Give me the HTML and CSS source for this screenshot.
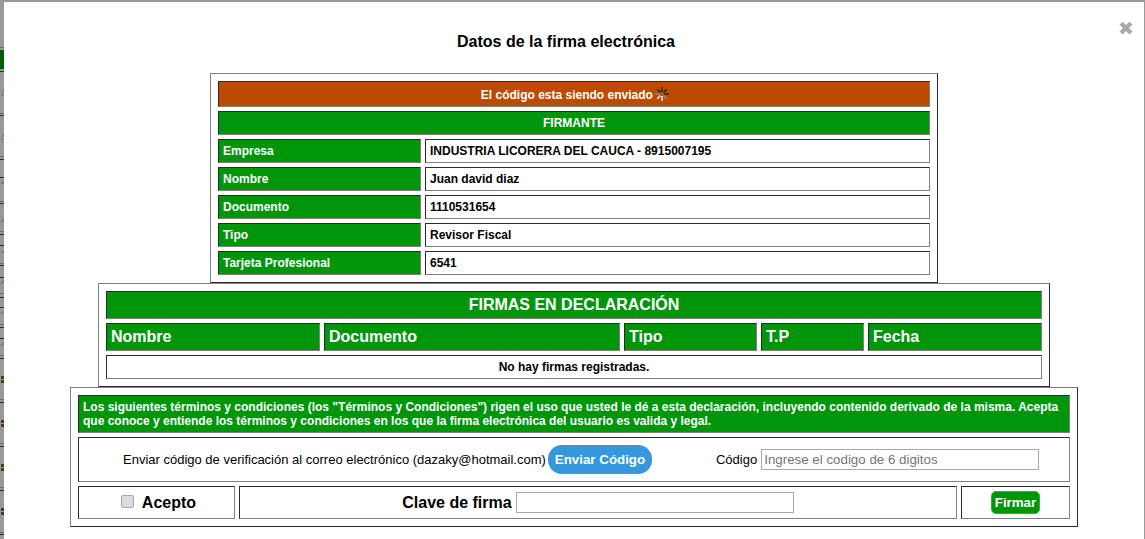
FILE: index.html
```html
<!DOCTYPE html>
<html lang="es">
<head>
<meta charset="utf-8">
<title>Datos de la firma electrónica</title>
<link rel="stylesheet" href="styles.css">
</head>
<body>
<svg class="strip" width="4" height="539" viewBox="0 0 4 539" aria-hidden="true">
  <rect class="s-green" x="0" y="50" width="4" height="19"/>
  <path class="s-light" d="M0 47.5h4M0 113.5h4M0 156.5h4M0 201.5h4M0 231.5h4M0 263.5h4M0 293.5h4M0 324.5h4M0 355.5h4M0 399.5h4M0 443.5h4M0 487.5h4M0 532.5h4"/>
  <path class="s-dark" d="M0 71.5h4M0 115.5h4M0 159.5h4M0 177.5h4M0 203.5h4M0 234.5h4M0 245.5h4M0 265.5h4M0 277.5h4M0 297.5h4M0 307.5h4M0 327.5h4M0 338.5h4M0 358.5h4M0 402.5h4M0 446.5h4M0 490.5h4M0 534.5h4"/>
  <path class="s-orange" d="M2 93l2-4M2 137l2-4M2 184l2-4M2 222l2-4M2 252l2-2M2 283l2-3M2 313l2-2M2 345l2-3"/>
  <path class="s-blue" d="M1 95h2M1 139h2M1 183h2M1 221h2M1 252h2M1 283h2M1 313h2M1 345h2"/>
  <path class="s-mark" d="M1 376h3v3h-3zM1 380h3v3h-3zM1 420h3v3h-3zM1 424h3v3h-3zM1 464h3v3h-3zM1 468h3v3h-3zM1 508h3v3h-3zM1 512h3v3h-3z"/>
</svg>

<main class="modal">
  <span class="close">✖</span>
  <h1 class="title">Datos de la firma electrónica</h1>

  <table class="box box-firmante">
    <colgroup><col class="c-label"><col class="c-value"></colgroup>
    <tbody>
      <tr class="row-status"><td colspan="2" class="cell orange center">El código esta siendo enviado
        <svg class="spinner" width="14" height="14" viewBox="0 0 14 14" aria-hidden="true">
          <path class="sp-dark" d="M7 0v5M2.2 2.2l3.2 3.2M11.8 2.2L8.6 5.4M14 7H9"/>
          <path class="sp-mid" d="M0 7h5M11.8 11.8L8.6 8.6"/>
          <path class="sp-light" d="M7 9v5M5.4 8.6l-3.2 3.2"/>
        </svg></td></tr>
      <tr><td colspan="2" class="cell green center">FIRMANTE</td></tr>
      <tr><td class="cell green">Empresa</td><td class="cell">INDUSTRIA LICORERA DEL CAUCA - 8915007195</td></tr>
      <tr><td class="cell green">Nombre</td><td class="cell">Juan david diaz</td></tr>
      <tr><td class="cell green">Documento</td><td class="cell">1110531654</td></tr>
      <tr><td class="cell green">Tipo</td><td class="cell">Revisor Fiscal</td></tr>
      <tr><td class="cell green">Tarjeta Profesional</td><td class="cell">6541</td></tr>
    </tbody>
  </table>

  <table class="box box-firmas">
    <colgroup><col class="c-nombre"><col class="c-doc"><col class="c-tipo"><col class="c-tp"><col class="c-fecha"></colgroup>
    <tbody>
      <tr class="row-big"><td colspan="5" class="cell green center big">FIRMAS EN DECLARACIÓN</td></tr>
      <tr class="row-big">
        <td class="cell green big">Nombre</td><td class="cell green big">Documento</td><td class="cell green big">Tipo</td><td class="cell green big">T.P</td><td class="cell green big">Fecha</td>
      </tr>
      <tr><td colspan="5" class="cell center">No hay firmas registradas.</td></tr>
    </tbody>
  </table>

  <table class="box box-terminos">
    <colgroup><col class="c-acepto"><col class="c-clave"><col class="c-firmar"></colgroup>
    <tbody>
      <tr><td colspan="3" class="cell green terms">Los siguientes términos y condiciones (los "Términos y Condiciones") rigen el uso que usted le dé a esta declaración, incluyendo contenido derivado de la misma. Acepta que conoce y entiende los términos y condiciones en los que la firma electrónica del usuario es valida y legal.</td></tr>
      <tr><td colspan="3" class="cell send-cell">
        <div class="send">
          <span class="send-text">Enviar código de verificación al correo electrónico (dazaky@hotmail.com)</span>
          <button class="btn-send" type="button">Enviar Código</button>
          <label class="code-label" for="codigo">Código</label>
          <input class="field" id="codigo" type="text" placeholder="Ingrese el codigo de 6 digitos">
        </div>
      </td></tr>
      <tr class="row-sign">
        <td class="cell"><label class="accept"><input class="check" type="checkbox"> Acepto</label></td>
        <td class="cell"><div class="clave"><label for="clave">Clave de firma</label><input class="field" id="clave" type="password"></div></td>
        <td class="cell"><div class="sign-wrap"><button class="btn-sign" type="button">Firmar</button></div></td>
      </tr>
    </tbody>
  </table>
</main>
</body>
</html>
```
FILE: styles.css
```css
* { box-sizing: border-box; }
html, body { margin: 0; padding: 0; height: 539px; overflow: hidden; }
body {
  background: #999;
  font-family: "Liberation Sans", Arial, sans-serif;
  font-size: 12px;
  color: #000;
}
.strip { position: absolute; left: 0; top: 0; }
.s-green { fill: #005c06; }
.s-light { stroke: #6e6e6e; fill: none; }
.s-dark { stroke: #2c2c2c; fill: none; }
.s-orange { stroke: #a8661c; fill: none; }
.s-blue { stroke: #3a6ea5; fill: none; }
.s-mark { fill: #4a3a26; }

.modal {
  position: relative;
  margin: 2px 1px 0 4px;
  height: 537px;
  background: #fff;
  padding-top: 30px;
  overflow: hidden;
}
.close {
  position: absolute;
  right: 10px;
  top: 16px;
  color: #aaa;
  font-family: "DejaVu Sans", sans-serif;
  font-size: 19px;
  line-height: 20px;
}
.title {
  margin: 0 16px 0 0;
  height: 41px;
  font-size: 16px;
  line-height: 19px;
  font-weight: bold;
  text-align: center;
}

.box {
  margin: 0 auto;
  border-collapse: separate;
  border-spacing: 4px;
  padding: 3px;
  border: 1px solid;
  border-color: #808080 #2b2b2b #2b2b2b #808080;
  table-layout: fixed;
}
.box-firmante { width: 728px; }
.box-firmas { width: 952px; }
.box-terminos { width: 1008px; }

.cell {
  padding: 0 4px;
  border: 1px solid;
  border-color: #2b2b2b #808080 #808080 #2b2b2b;
  height: 24px;
  font-size: 12px;
  font-weight: bold;
}
.green { background: #00960c; color: #fff; }
.orange { background: #ba4b00; color: #fff; }
.center { text-align: center; }
.c-label { width: 203px; }
.c-value { width: 505px; }
.row-status .cell { height: 26px; padding-top: 1px; padding-left: 6px; }
.spinner { vertical-align: -2px; margin-top: -3px; margin-left: -1px; }
.sp-dark { stroke: #2a2a2a; stroke-width: 1.5; fill: none; }
.sp-mid { stroke: #8a8a8a; stroke-width: 1.5; fill: none; }
.sp-light { stroke: #eee; stroke-width: 1.5; fill: none; }

.row-big .cell { height: 28px; }
.big { font-size: 16px; }
.c-nombre { width: 214px; }
.c-doc { width: 296px; }
.c-tipo { width: 133px; }
.c-tp { width: 103px; }
.c-fecha { width: 174px; }

.c-acepto { width: 157px; }
.c-clave { width: 718px; }
.c-firmar { width: 109px; }
.terms { height: 38px; line-height: 14px; }
.send-cell { height: 45px; padding: 0; font-weight: normal; font-size: 13px; }
.send { display: flex; align-items: center; padding-left: 44px; }
.send-text { width: 425px; white-space: nowrap; }
.btn-send {
  width: 104px;
  height: 29px;
  padding: 0;
  border: 0;
  border-radius: 14px;
  background: #3498db;
  color: #fff;
  font-family: inherit;
  font-size: 13.33px;
  font-weight: bold;
}
.code-label { margin-left: 64px; margin-right: 4px; }
.field {
  width: 278px;
  height: 21px;
  padding: 1px 2px;
  border: 1px solid #a9a9a9;
  border-radius: 0;
  background: #fff;
  font-family: inherit;
  font-size: 13.33px;
  outline: 0;
}
.field::placeholder { color: #757575; opacity: 1; }

.row-sign .cell { height: 33px; padding: 0; }
.accept {
  display: flex;
  align-items: center;
  justify-content: center;
  gap: 8px;
  font-size: 16px;
  padding-left: 4px;
}
.check {
  appearance: none;
  margin: 0 0 2px;
  width: 13px;
  height: 13px;
  background: #dcdcdc;
  border: 1px solid #a9a9a9;
  border-radius: 2px;
}
.clave {
  display: flex;
  align-items: center;
  justify-content: center;
  gap: 4px;
  font-size: 16px;
}
.sign-wrap { display: flex; justify-content: center; }
.btn-sign {
  width: 49px;
  height: 23px;
  padding: 0;
  border: 1px solid #2fae3a;
  border-radius: 5px;
  background: #00960c;
  color: #fff;
  font-family: inherit;
  font-size: 13.33px;
  font-weight: bold;
}
```
